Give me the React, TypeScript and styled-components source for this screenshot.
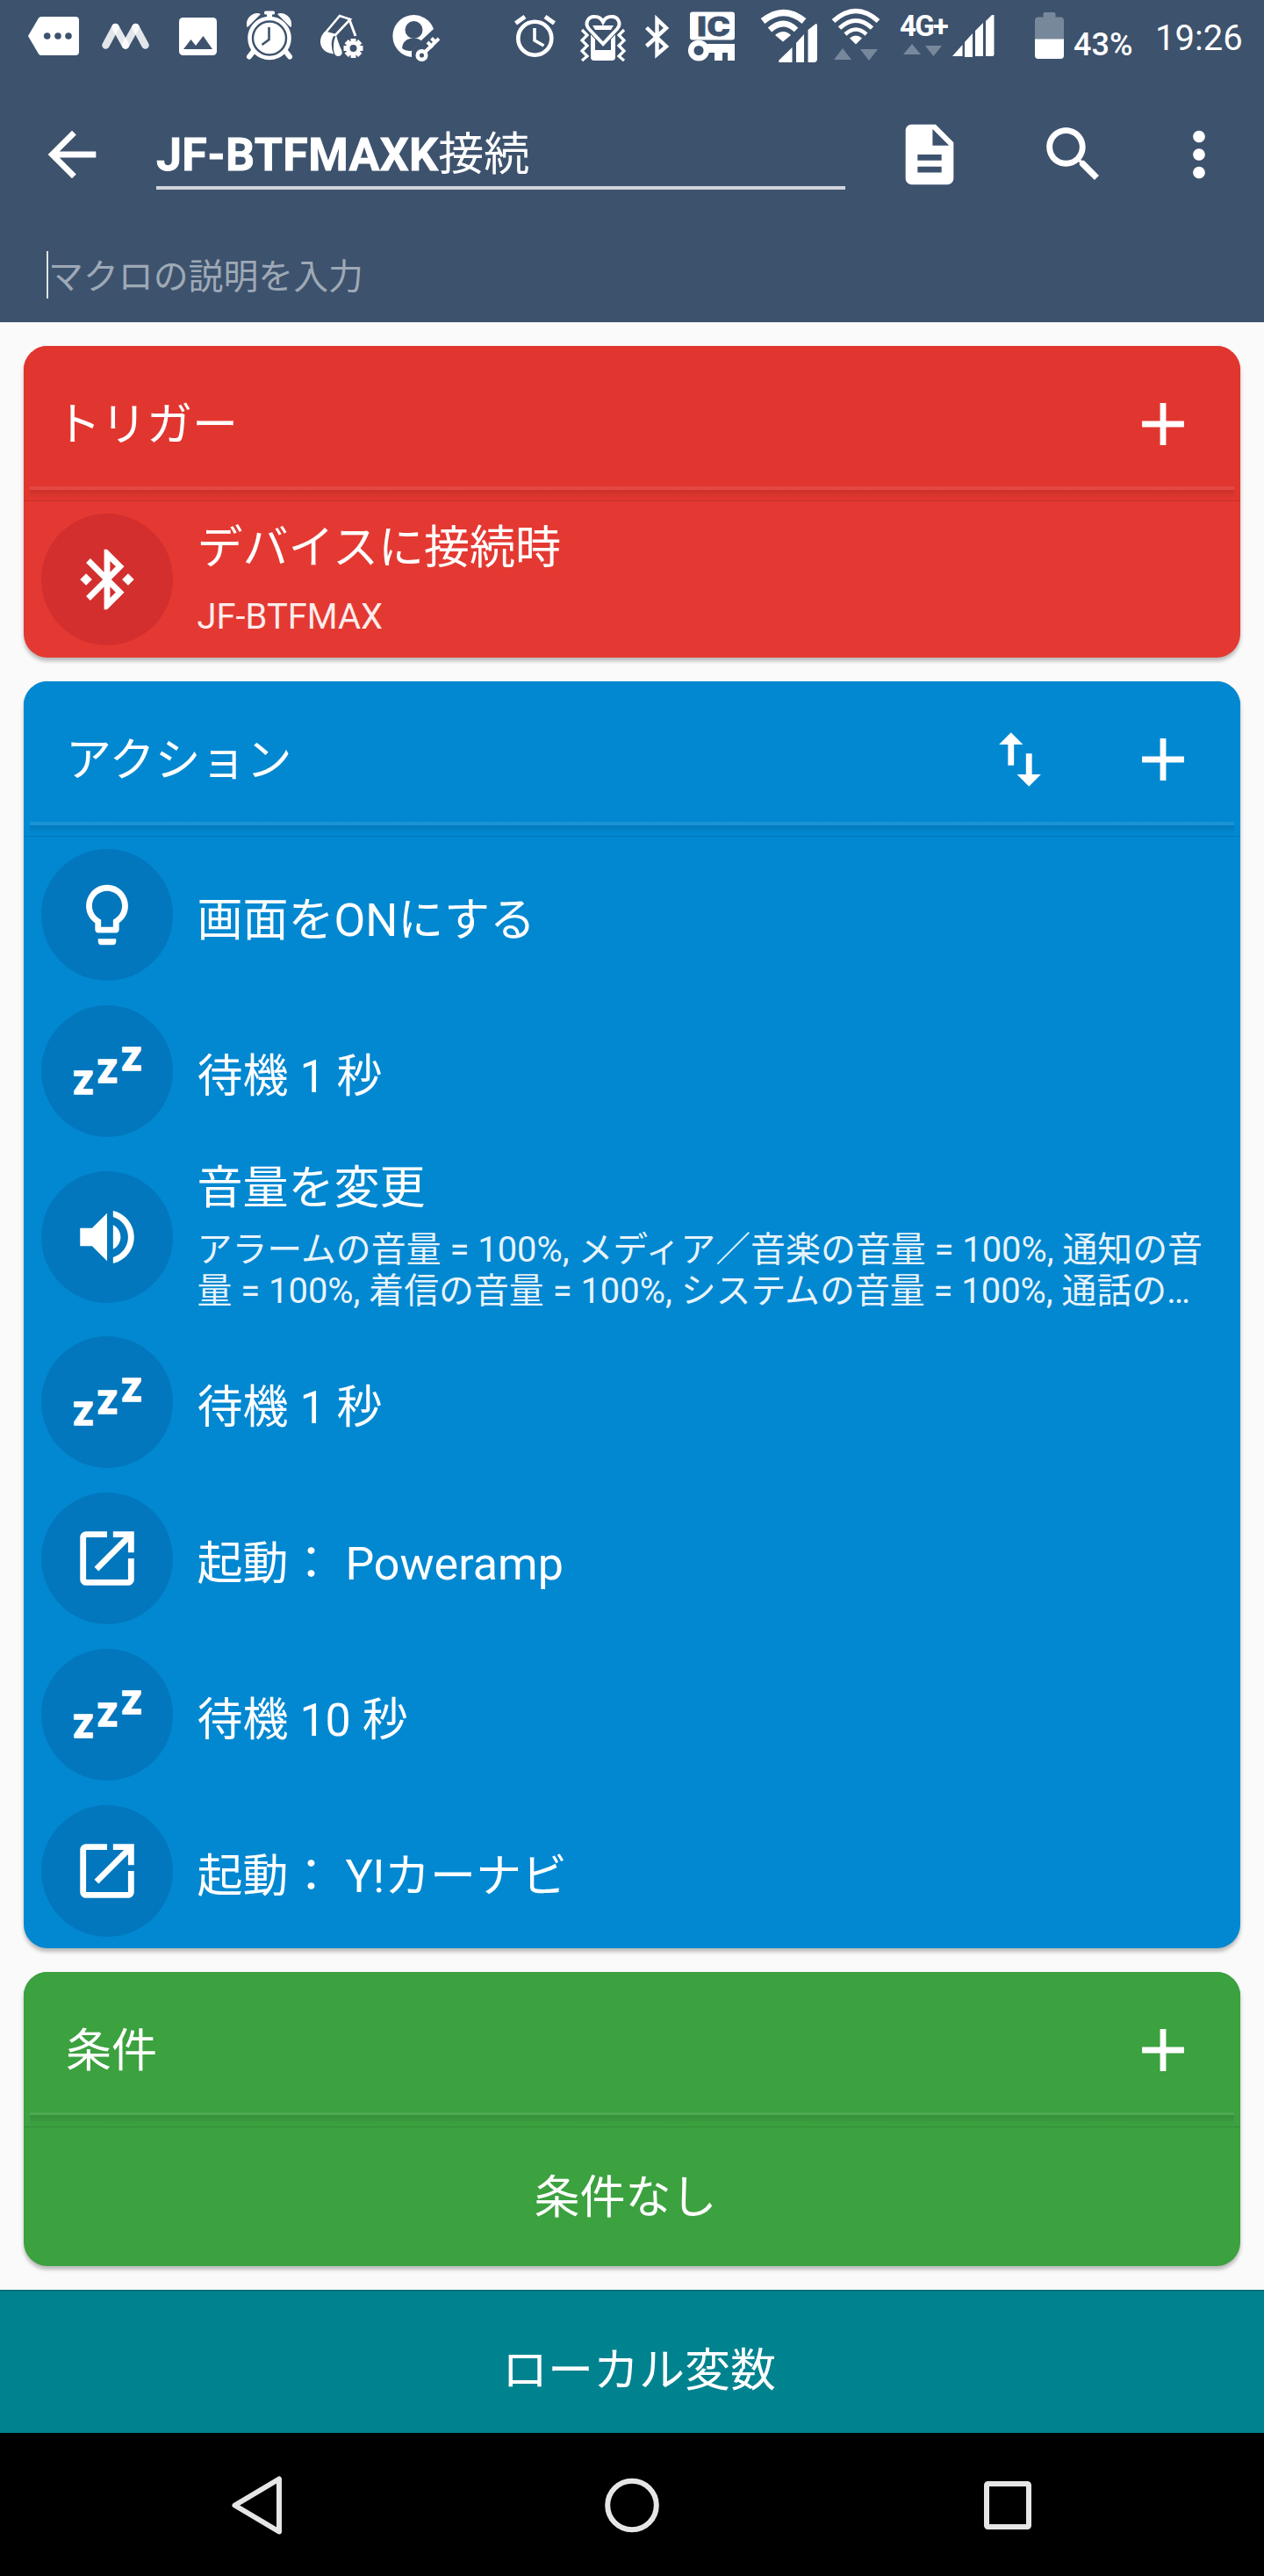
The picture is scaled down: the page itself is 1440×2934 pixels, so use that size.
import React from "react";
import styled, { createGlobalStyle } from "styled-components";

const Global = createGlobalStyle`
  * { box-sizing: border-box; }
  html, body { margin: 0; padding: 0; background: #fafafa; }
  body { font-family: Roboto, "Noto Sans CJK JP", sans-serif; color: #fff; }
`;

const Screen = styled.div`
  width: 1440px;
  height: 2934px;
  display: flex;
  flex-direction: column;
  overflow: hidden;
  background: #fafafa;
`;

/* ---------- status bar ---------- */

const Header = styled.header`
  height: 367px;
  flex: none;
  background: #3d526d;
  display: flex;
  flex-direction: column;
`;

const StatusBar = styled.div`
  height: 84px;
  flex: none;
  display: flex;
  align-items: flex-start;
  padding-top: 6px;
`;

const StatusIcon = styled.svg<{ $gap: number }>`
  flex: none;
  height: 70px;
  margin-left: ${(p) => p.$gap}px;
  fill: #fff;
  stroke: none;
`;

const NetworkType = styled.div`
  width: 53px;
  height: 70px;
  margin-left: 22px;
  display: flex;
  flex-direction: column;
`;

const NetworkLabel = styled.span`
  font-size: 33px;
  font-weight: 700;
  line-height: 36px;
  letter-spacing: -1.8px;
  padding-top: 6px;
  white-space: nowrap;
`;

const Arrows = styled.svg`
  width: 46px;
  height: 16px;
  margin: 1px 0 0 2px;
  fill: #78889b;
`;

const Percent = styled.span`
  width: 70px;
  margin-left: 11px;
  padding-top: 24px;
  font-size: 36px;
  font-weight: 500;
  line-height: 42px;
  white-space: nowrap;
`;

const Clock = styled.span`
  margin-left: 23px;
  padding-top: 14px;
  font-size: 40px;
  line-height: 48px;
  white-space: nowrap;
`;

/* ---------- app bar ---------- */

const AppBar = styled.div`
  height: 184px;
  flex: none;
  display: flex;
  align-items: center;
  padding-left: 41px;
`;

const Glyph = styled.svg<{ $gap?: number }>`
  width: 82px;
  height: 82px;
  flex: none;
  fill: #fff;
  margin-left: ${(p) => p.$gap ?? 0}px;
`;

const NameField = styled.div`
  width: 785px;
  height: 82px;
  margin: 0 0 2px 55px;
  border-bottom: 4px solid #d0d5da;
  font-size: 52px;
  line-height: 86px;
  white-space: nowrap;
`;

const NameLatin = styled.span`
  font-weight: 700;
  letter-spacing: 0.3px;
  -webkit-text-stroke: 0.8px #fff;
`;

const Description = styled.div`
  height: 90px;
  display: flex;
  align-items: center;
  padding: 0 0 0 53px;
`;

const Caret = styled.span`
  width: 2px;
  height: 54px;
  background: #dfe3e8;
`;

const Placeholder = styled.span`
  padding-top: 5px;
  color: #9ea9b6;
  font-size: 39.9px;
  line-height: 54px;
`;

/* ---------- cards ---------- */

const Content = styled.main`
  height: 2241px;
  flex: none;
  padding: 27px 27px 0;
  display: flex;
  flex-direction: column;
  gap: 27px;
`;

const Card = styled.section<{ $height: number; $color: string }>`
  height: ${(p) => p.$height}px;
  flex: none;
  display: flex;
  flex-direction: column;
  overflow: hidden;
  border-radius: 27px;
  background: ${(p) => p.$color};
  box-shadow: 0 4px 4px rgba(0, 0, 0, 0.26);
`;

const CardHead = styled.div<{ $color: string; $inset: number }>`
  height: 160px;
  flex: none;
  display: flex;
  align-items: center;
  padding: 18px 47px 0 ${(p) => p.$inset}px;
  background: ${(p) => p.$color};
`;

const CardTitle = styled.h2`
  margin: 0;
  flex: 1;
  padding-top: 4px;
  font-size: 52px;
  font-weight: 400;
  line-height: 76px;
  white-space: nowrap;
`;

const Divider = styled.div<{ $color: string }>`
  height: 17px;
  flex: none;
  padding: 0 7px;
  background: ${(p) => p.$color};
  border-bottom: 1px solid rgba(0, 0, 0, 0.13);

  &::before {
    content: "";
    display: block;
    height: 13px;
    background: linear-gradient(
      rgba(255, 255, 255, 0.09) 0 3.5px,
      rgba(0, 0, 0, 0.085) 3.5px 6px,
      rgba(0, 0, 0, 0) 13px
    );
  }
`;

const Row = styled.div<{ $height?: number }>`
  height: ${(p) => p.$height ?? 178}px;
  flex: none;
  display: flex;
  align-items: center;
  padding-left: 20px;
`;

const Disc = styled.div<{ $color: string }>`
  width: 150px;
  height: 150px;
  flex: none;
  display: flex;
  align-items: center;
  justify-content: center;
  border-radius: 50%;
  background: ${(p) => p.$color};
`;

const RowText = styled.div<{ $detailed?: boolean }>`
  margin-left: 27.5px;
  padding: ${(p) => (p.$detailed ? "0 0 8px" : "13px 0 0")};
  display: flex;
  flex-direction: column;
  white-space: nowrap;
`;

const RowTitle = styled.span`
  font-size: 52px;
  line-height: 76px;
`;

const RowDetails = styled.div<{ $gap: number }>`
  display: flex;
  flex-direction: column;
  margin-top: ${(p) => p.$gap}px;
`;

const RowDetail = styled.span`
  font-size: 39.9px;
  line-height: 47px;
  color: rgba(255, 255, 255, 0.92);
`;

const Empty = styled.div`
  flex: 1;
  display: flex;
  align-items: center;
  justify-content: center;
  padding: 0 15px 7px 0;
  font-size: 52px;
`;

/* ---------- bottom ---------- */

const LocalVars = styled.button`
  height: 163px;
  flex: none;
  border: 0;
  border-top: 2px solid #00707c;
  padding: 20px 0 0 16px;
  background: #00838f;
  color: #fff;
  font: inherit;
  font-size: 52px;
  line-height: 76px;
`;

const NavBar = styled.nav`
  height: 163px;
  flex: none;
  display: flex;
  align-items: center;
  justify-content: space-between;
  padding: 0 252px 0 252px;
  background: #000;
`;

const NavIcon = styled.svg`
  width: 80px;
  height: 80px;
  fill: none;
  stroke: #e6e6e6;
  stroke-width: 6;
  stroke-linejoin: round;
`;

const PATHS = {
  back: "M20 11H7.83l5.59-5.59L12 4l-8 8 8 8 1.41-1.41L7.83 13H20v-2z",
  doc: "M14 2H6c-1.1 0-1.99.9-1.99 2L4 20c0 1.1.89 2 1.99 2H18c1.1 0 2-.9 2-2V8l-6-6zm2 16H8v-2h8v2zm0-4H8v-2h8v2zm-3-5V3.5L18.5 9H13z",
  search:
    "M15.5 14h-.79l-.28-.27C15.41 12.59 16 11.11 16 9.5 16 5.91 13.09 3 9.5 3S3 5.91 3 9.5 5.91 16 9.5 16c1.61 0 3.09-.59 4.23-1.57l.27.28v.79l5 4.99L20.49 19l-4.99-5zm-6 0C7.01 14 5 11.99 5 9.5S7.01 5 9.5 5 14 7.01 14 9.5 11.99 14 9.5 14z",
  more: "M12 8c1.1 0 2-.9 2-2s-.9-2-2-2-2 .9-2 2 .9 2 2 2zm0 2c-1.1 0-2 .9-2 2s.9 2 2 2 2-.9 2-2-.9-2-2-2zm0 6c-1.1 0-2 .9-2 2s.9 2 2 2 2-.9 2-2-.9-2-2-2z",
  plus: "M19 13h-6v6h-2v-6H5v-2h6V5h2v6h6v2z",
  swap: "M16 17.01V10h-2v7.01h-3L15 21l4-3.99h-3zM9 3L5 6.99h3V14h2V6.99h3L9 3z",
  bluetooth:
    "M7 12l-2-2-2 2 2 2 2-2zm10.71-4.29L12 2h-1v7.59L6.41 5 5 6.41 10.59 12 5 17.59 6.41 19 11 14.41V22h1l5.71-5.71-4.3-4.29 4.3-4.29zM13 5.83l1.88 1.88L13 9.59V5.83zm1.88 10.46L13 18.17v-3.76l1.88 1.88zM19 10l-2 2 2 2 2-2-2-2z",
  bulb: "M9 21c0 .55.45 1 1 1h4c.55 0 1-.45 1-1v-1H9v1zm3-19C8.14 2 5 5.14 5 9c0 2.38 1.19 4.47 3 5.74V17c0 .55.45 1 1 1h6c.55 0 1-.45 1-1v-2.26c1.81-1.27 3-3.36 3-5.74 0-3.86-3.14-7-7-7zm2.85 11.1l-.85.6V16h-4v-2.3l-.85-.6C7.8 12.16 7 10.63 7 9c0-2.76 2.24-5 5-5s5 2.24 5 5c0 1.63-.8 3.16-2.15 4.1z",
  volume:
    "M3 9v6h4l5 5V4L7 9H3zm13.5 3c0-1.77-1.02-3.29-2.5-4.03v8.05c1.48-.73 2.5-2.25 2.5-4.02zM14 3.23v2.06c2.89.86 5 3.54 5 6.71s-2.11 5.85-5 6.71v2.06c4.01-.91 7-4.49 7-8.77s-2.99-7.86-7-8.77z",
  open: "M19 19H5V5h7V3H5c-1.11 0-2 .9-2 2v14c0 1.1.89 2 2 2h14c1.1 0 2-.9 2-2v-7h-2v7zM14 3v2h3.59l-9.83 9.83 1.41 1.41L19 6.41V10h2V3h-7z",
};

type IconName = keyof typeof PATHS;

const Icon = ({ name, gap }: { name: IconName; gap?: number }) => (
  <Glyph viewBox="0 0 24 24" $gap={gap}>
    <path d={PATHS[name]} />
  </Glyph>
);

const SleepText = styled.text`
  font-family: Roboto, sans-serif;
  font-weight: 900;
  font-size: 36.4px;
  stroke: #fff;
  stroke-width: 1.6px;
`;

const Sleep = () => (
  <Glyph viewBox="0 0 82 82">
    {[
      [2.7, 67.4],
      [30.3, 54],
      [57.8, 40.4],
    ].map(([x, y]) => (
      <SleepText key={x} x={x} y={y} textLength="22" lengthAdjust="spacingAndGlyphs">
        Z
      </SleepText>
    ))}
  </Glyph>
);

const BLUE_DISC = "#0277bd";

const actions: { icon: IconName | "sleep"; title: string; detail?: string[] }[] = [
  { icon: "bulb", title: "画面をONにする" },
  { icon: "sleep", title: "待機 1 秒" },
  {
    icon: "volume",
    title: "音量を変更",
    detail: [
      "アラームの音量 = 100%, メディア／音楽の音量 = 100%, 通知の音",
      "量 = 100%, 着信の音量 = 100%, システムの音量 = 100%, 通話の…",
    ],
  },
  { icon: "sleep", title: "待機 1 秒" },
  { icon: "open", title: "起動： Poweramp" },
  { icon: "sleep", title: "待機 10 秒" },
  { icon: "open", title: "起動： Y!カーナビ" },
];

const BG = "#3d526d";
const GEAR_TEETH = [0, 45, 90, 135];

const IcText = styled.text`
  font-family: Roboto, sans-serif;
  font-weight: 900;
  font-size: 31px;
  fill: ${BG};
  stroke: ${BG};
  stroke-width: 0.8px;
`;

const Status = () => (
  <StatusBar>
    {/* message tag */}
    <StatusIcon $gap={32} width="58" viewBox="32 6 58 70">
      <path d="M47 19h39q4 0 4 4v36q0 4-4 4H47q-2 0-3-1.500L32 41 44 20.500q1-1.500 3-1.500z" />
      <g fill={BG}>
        <circle cx="53.700" cy="41" r="3.800" />
        <circle cx="66" cy="41" r="3.800" />
        <circle cx="78" cy="41" r="3.800" />
      </g>
    </StatusIcon>
    {/* zigzag app logo */}
    <StatusIcon $gap={26} width="54" viewBox="116 6 54 70">
      <g stroke="#fff" strokeWidth="8.500" strokeLinecap="round">
        <path d="M120.500 51.500L131.500 31" strokeOpacity="0.85" />
        <path d="M131.500 31L143 51.500" strokeOpacity="0.88" />
        <path d="M143 51.500L154.500 31" strokeOpacity="0.85" />
        <path d="M154.500 31L165.500 51.500" strokeOpacity="0.85" />
      </g>
    </StatusIcon>
    {/* picture */}
    <StatusIcon $gap={34} width="43" viewBox="204 6 43 70">
      <rect x="204" y="20" width="43" height="43" rx="4.500" />
      <path d="M209 56l8.500-11 5.500 7 8.500-11L242 56z" fill={BG} />
    </StatusIcon>
    {/* alarm clock with bells */}
    <StatusIcon $gap={33} width="54" viewBox="280 6 54 70">
      <path d="M281 30q-1-8 5-12.500 6-4 11-1.500l-15 15zM332 30q1-8-5-12.500-6-4-11-1.500l15 15z" />
      <rect x="301" y="12.500" width="12" height="4" rx="1.500" />
      <rect x="304" y="15" width="6" height="7" />
      <path d="M289 58l-5 6.500M325 58l5 6.500" stroke="#fff" strokeWidth="6" strokeLinecap="round" />
      <circle cx="307" cy="43.500" r="22.500" fill={BG} stroke="#fff" strokeWidth="4.600" />
      <circle cx="307" cy="43.500" r="17.800" />
      <path d="M306.500 31v14l-8 6" fill="none" stroke={BG} strokeWidth="2.600" />
    </StatusIcon>
    {/* eraser with gear */}
    <StatusIcon $gap={31} width="50" viewBox="365 6 50 70">
      <path d="M371 37L387 18l12 4-17 18z" fill="none" stroke="#fff" strokeWidth="2.600" />
      <path d="M397.500 21l7.500 20" fill="none" stroke="#fff" strokeWidth="3" />
      <path d="M370 36l11 3.500q-6 9-1 22-14-2-15-13-.5-7 5-12.500z" />
      <path d="M383 40q3 11 6.500 18 1 6-5 6-4-1-4.500-8-.5-10 3-16z" />
      <g stroke="#fff" strokeWidth="6">
        {GEAR_TEETH.map((a) => (
          <path key={a} d="M402.500 44v22" transform={`rotate(${a} 402.500 55)`} />
        ))}
      </g>
      <circle cx="402.500" cy="55" r="8" />
      <circle cx="402.500" cy="55" r="4" fill={BG} />
    </StatusIcon>
    {/* account key */}
    <StatusIcon $gap={32} width="54" viewBox="447 6 54 70">
      <path d="M469 65a24 24 0 1 1 25-32L480 46l-11 12z" />
      <circle cx="471.500" cy="34" r="10" fill={BG} />
      <path d="M458 55q1-11 13-11.500 6 0 9 3L470 57.500q-7 2-12-2.500z" fill={BG} />
      <circle cx="480.500" cy="63" r="4.800" fill="none" stroke="#fff" strokeWidth="4.500" />
      <path d="M484 59.500L500 44M487 48l6 6M491.500 43.500l5 5" stroke="#fff" strokeWidth="4" />
    </StatusIcon>
    {/* alarm */}
    <StatusIcon $gap={85} width="47" viewBox="586 6 47 70">
      <circle cx="609.300" cy="43.700" r="19" fill="none" stroke="#fff" strokeWidth="4.600" />
      <path d="M609 32v14l10.500 6" fill="none" stroke="#fff" strokeWidth="3.600" />
      <path d="M587.500 26.500L598 19M631.500 26.500L621 19" stroke="#fff" strokeWidth="5" />
    </StatusIcon>
    {/* vibrating phone with heart */}
    <StatusIcon $gap={28} width="53" viewBox="661 6 53 70">
      <rect x="673" y="27" width="28" height="42" rx="4" />
      <rect x="678" y="34" width="18" height="23" fill={BG} />
      <path
        d="M687 50L671 33c-6-7 0-15 7-14 4 0 7 2 9 6 2-4 5-6 9-6 7-1 13 7 7 14z"
        fill={BG}
        stroke={BG}
        strokeWidth="6"
      />
      <path d="M675 29h24l-3 5h-18z" />
      <path
        d="M687 50L671 33c-6-7 0-15 7-14 4 0 7 2 9 6 2-4 5-6 9-6 7-1 13 7 7 14z"
        fill="none"
        stroke="#fff"
        strokeWidth="4"
      />
      <path
        d="M663 34l6 6-6 6 6 6-6 6 6 6-6 5M711 34l-6 6 6 6-6 6 6 6-6 6 6 5"
        fill="none"
        stroke="#fff"
        strokeWidth="3.200"
      />
    </StatusIcon>
    {/* bluetooth */}
    <StatusIcon $gap={21} width="28" viewBox="735 6 28 70">
      <path
        d="M736.500 31.500L759 53l-10.500 9V22L759 32l-22.500 20.500"
        fill="none"
        stroke="#fff"
        strokeWidth="4.400"
      />
    </StatusIcon>
    {/* IC card lock */}
    <StatusIcon $gap={20} width="55" viewBox="783 6 55 70">
      <rect x="786" y="13.500" width="51" height="32" rx="3" />
      <IcText x="793.500" y="40.500" textLength="38" lengthAdjust="spacingAndGlyphs">
        IC
      </IcText>
      <circle cx="796" cy="57.500" r="8.800" fill="none" stroke="#fff" strokeWidth="6.500" />
      <path d="M804 50h33v19h-8v-9h-6v9h-9v-9h-10z" />
    </StatusIcon>
    {/* wifi with cellular bars */}
    <StatusIcon $gap={28} width="66" viewBox="866 6 66 70">
      <g fill="none" stroke="#fff">
        <path d="M869 24q24-19 47 0" strokeWidth="7.500" />
        <path d="M877 34q15.500-14 30 0" strokeWidth="6.500" />
      </g>
      <path d="M883 40q9.500-8 18 0l-9 7.500z" />
      <path d="M902.500 54v17H888q-2-1 0-3zM907 49l9-10v32h-9zM920.500 34l9-7q1.500 0 1.500 2v38q0 4-4 4h-6.500z" />
    </StatusIcon>
    {/* wifi */}
    <StatusIcon $gap={15} width="56" viewBox="947 6 56 70">
      <g fill="none" stroke="#fff">
        <path d="M949.500 24q25.500-23 51 0" strokeWidth="5.500" />
        <path d="M956.500 32q18.500-17 37 0" strokeWidth="5" />
        <path d="M963 39q12-11 24 0" strokeWidth="4.500" />
      </g>
      <path d="M968 43.500q7-6 14 0l-7 7z" />
      <path d="M950 68h20l-10-13zM980 56h20l-10 13z" fill="#78889b" />
    </StatusIcon>
    <NetworkType>
      <NetworkLabel>4G+</NetworkLabel>
      <Arrows viewBox="0 0 46 16">
        <path d="M2 13h20L12 1zM27 3h19L36.500 15z" />
      </Arrows>
    </NetworkType>
    {/* cellular bars */}
    <StatusIcon $gap={7} width="48" viewBox="1085 6 48 70">
      <path d="M1085 64l11.500-13v13zM1099 48l9-10v27h-9zM1111 35l9-9v38h-9zM1123 24l7-7h2.500v45q0 2-2 2h-7.500z" />
    </StatusIcon>
    {/* battery */}
    <StatusIcon $gap={46} width="33" viewBox="1179 6 33 70">
      <path
        d="M1183 19.500h5.500V16q0-2 2-2h10q2 0 2 2v3.500h5.500q4 0 4 4V63q0 4-4 4h-25q-4 0-4-4V23.500q0-4 4-4z"
        fill="#78889b"
      />
      <path d="M1179 44.500h33V63q0 4-4 4h-25q-4 0-4-4z" />
    </StatusIcon>
    <Percent>43%</Percent>
    <Clock>19:26</Clock>
  </StatusBar>
);

export default function App() {
  return (
    <>
      <Global />
      <Screen>
        <Header>
          <Status />
          <AppBar>
            <Icon name="back" />
            <NameField>
              <NameLatin>JF-BTFMAXK</NameLatin>接続
            </NameField>
            <Icon name="doc" gap={55} />
            <Icon name="search" gap={82} />
            <Icon name="more" gap={61} />
          </AppBar>
          <Description>
            <Caret />
            <Placeholder>マクロの説明を入力</Placeholder>
          </Description>
        </Header>

        <Content>
          <Card $height={355} $color="#e43932">
            <CardHead $color="#e1362f" $inset={36}>
              <CardTitle>トリガー</CardTitle>
              <Icon name="plus" />
            </CardHead>
            <Divider $color="#e1362f" />
            <Row>
              <Disc $color="#d32f2e">
                <Icon name="bluetooth" />
              </Disc>
              <RowText $detailed>
                <RowTitle>デバイスに接続時</RowTitle>
                <RowDetails $gap={16}>
                  <RowDetail>JF-BTFMAX</RowDetail>
                </RowDetails>
              </RowText>
            </Row>
          </Card>

          <Card $height={1443} $color="#0288d1">
            <CardHead $color="#0288d1" $inset={48}>
              <CardTitle>アクション</CardTitle>
              <Icon name="swap" />
              <Icon name="plus" gap={81} />
            </CardHead>
            <Divider $color="#0288d1" />
            {actions.map((a, i) => (
              <Row key={i} $height={a.detail ? 199 : 178}>
                <Disc $color={BLUE_DISC}>
                  {a.icon === "sleep" ? <Sleep /> : <Icon name={a.icon} />}
                </Disc>
                <RowText $detailed={Boolean(a.detail)}>
                  <RowTitle>{a.title}</RowTitle>
                  {a.detail && (
                    <RowDetails $gap={8}>
                      {a.detail.map((line) => (
                        <RowDetail key={line}>{line}</RowDetail>
                      ))}
                    </RowDetails>
                  )}
                </RowText>
              </Row>
            ))}
          </Card>

          <Card $height={335} $color="#3ca13f">
            <CardHead $color="#3ca13f" $inset={48}>
              <CardTitle>条件</CardTitle>
              <Icon name="plus" />
            </CardHead>
            <Divider $color="#3ca13f" />
            <Empty>条件なし</Empty>
          </Card>
        </Content>

        <LocalVars>ローカル変数</LocalVars>
        <NavBar>
          <NavIcon viewBox="0 0 80 80">
            <path d="M66 10.500v60L15.500 40.500z" />
          </NavIcon>
          <NavIcon viewBox="0 0 80 80">
            <circle cx="40" cy="40.500" r="27.800" />
          </NavIcon>
          <NavIcon viewBox="0 0 80 80">
            <rect x="16" y="16" width="48" height="49" rx="1.500" />
          </NavIcon>
        </NavBar>
      </Screen>
    </>
  );
}
